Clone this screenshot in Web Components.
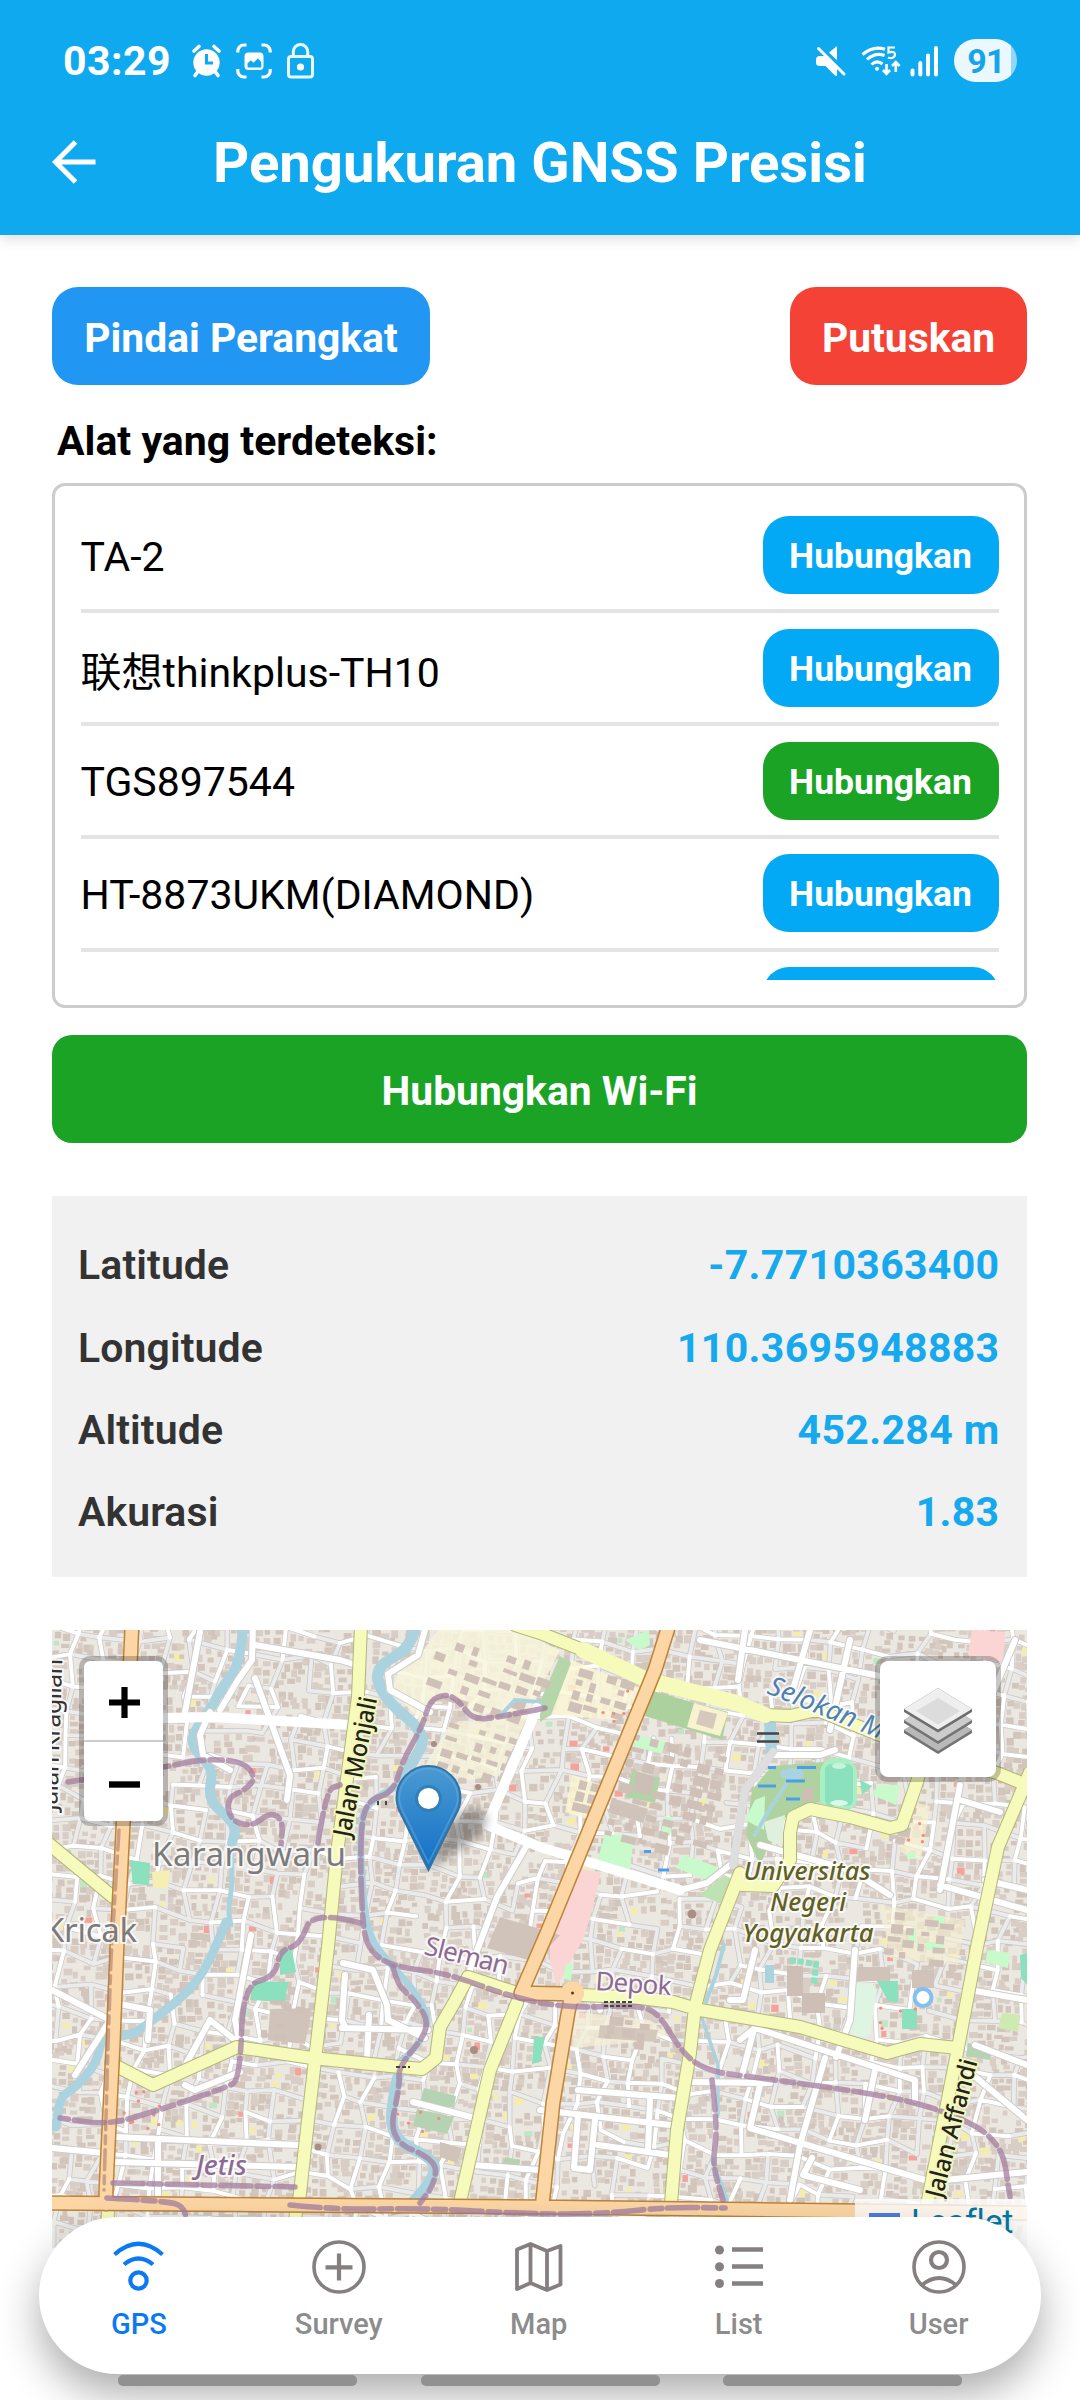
<!DOCTYPE html>
<html lang="id">
<head>
<meta charset="utf-8">
<title>Pengukuran GNSS Presisi</title>
<style>
html,body{margin:0;padding:0;background:#fff}
body{width:1080px;height:2400px;overflow:hidden;font-family:Roboto,"Noto Sans CJK SC",sans-serif;color:#000}
</style>
</head>
<body>
<gnss-app></gnss-app>
<script>
const define=(name,html,setup)=>{
  const t=document.createElement('template');t.innerHTML=html;
  customElements.define(name,class extends HTMLElement{
    constructor(){super();this.attachShadow({mode:'open'}).appendChild(t.content.cloneNode(true));}
    connectedCallback(){if(setup&&!this.ready){this.ready=true;setup(this,this.shadowRoot);}}
  });
};

define('status-bar',`<style>
:host{display:flex;justify-content:space-between;height:122px;padding:0 63px;box-sizing:border-box;color:#fff}
div{display:flex;align-items:center;height:121px}
.time{font-size:41px;font-weight:700;line-height:48px;margin-right:21px;letter-spacing:.5px}
svg{display:block;overflow:visible}
.bat{width:63px;height:43px;border-radius:22px;background:linear-gradient(90deg,#ecf8ff 0 57px,#90d7f9 57px);color:#16a5ea;font-size:34px;font-weight:700;line-height:44px;display:block;text-align:center;margin-left:15px;text-indent:1px;letter-spacing:-.8px}
</style>
<div><span class="time">03:29</span>
<svg width="29" height="33" viewBox="0 0 29 33" style="margin-right:15px"><circle cx="14.5" cy="18.5" r="13.2" fill="#fff"/><path d="M2 7l5-4.500M27 7l-5-4.500M5.500 28l-2.500 3.500M23.500 28l2.500 3.500" stroke="#fff" stroke-width="3.600" stroke-linecap="round"/><path d="M14.500 10v9h6.500" fill="none" stroke="#0fa9f0" stroke-width="3"/></svg>
<svg width="36" height="36" viewBox="0 0 36 36" style="margin-right:15px"><path d="M1.800 9.500V8a6 6 0 0 1 6-6h2.700M25.500 2h2.700a6 6 0 0 1 6 6v1.500M34.200 26v2a6 6 0 0 1-6 6h-2.700M10.500 34H7.800a6 6 0 0 1-6-6v-2" fill="none" stroke="#fff" stroke-width="3.200"/><rect x="8.500" y="9.500" width="19" height="17.500" rx="4" fill="#fff"/><path d="M11.500 23.500v-3.200l3.500-3 2.500 2.400 4.500-4.400 3.300 4v4.200q0 1-1 1h-11.800q-1 0-1-1z" fill="#0fa9f0"/></svg>
<svg width="27" height="36" viewBox="0 0 27 36"><rect x="1.500" y="13.500" width="24" height="20.500" rx="2.500" fill="none" stroke="#e9f9ff" stroke-width="3"/><path d="M6.300 13V8.500a7.200 7 0 0 1 14.400 0V13" fill="none" stroke="#e9f9ff" stroke-width="3"/><circle cx="13.500" cy="24" r="3.600" fill="#fff"/></svg></div>
<div>
<svg width="30" height="30" viewBox="0 0 30 30" style="margin-right:15px"><path d="M0 14q0-4 4-4h4.500L21 22.500V30q-1.500 0-2.500-1L9.500 20H4q-4 0-4-3zM13 6.500L21 0v14.200z" fill="#fff"/><path d="M2.500 2.500L28 28" stroke="#fff" stroke-width="3" stroke-linecap="round"/></svg>
<svg width="41" height="30" viewBox="0 0 41 30" style="margin-right:8px"><g fill="none" stroke="#fff" stroke-width="3"><path d="M1.500 8.500Q12 -0.500 24 3.200M6 13.500Q14.500 6 23.500 9.500M10.500 18.500Q16 13.500 21.500 18"/><path d="M34 1.500h-6.500v5c5-1.500 6.800 0 6.500 2.500s-3.500 4-7 2.500" stroke-width="2.200"/><path d="M25.500 18v9M22 24l3.500 3.800L29 24M34.800 26v-9.500M31 20l3.800-3.800L38.600 20" stroke-width="2.600"/></g><circle cx="16" cy="22.800" r="2" fill="#fff"/></svg>
<svg width="29" height="30" viewBox="0 0 29 30"><path d="M2.500 24.500v4M10.300 17v11.500M18 9.500v19M26 2v26.500" stroke="#fff" stroke-width="4" stroke-linecap="round"/></svg>
<span class="bat">91</span></div>`);

define('app-header',`<style>
:host{display:block;background:#0fa9f0;height:235px;box-shadow:0 4px 12px rgba(0,0,0,.13)}
.bar{display:flex;align-items:center;height:83px;padding-left:52px}
.bar svg{flex:none;margin-bottom:4px}
h1{margin:0;width:888px;text-align:center;color:#fff;font-size:56.25px;font-weight:700;line-height:83px;white-space:nowrap}
</style><status-bar></status-bar>
<div class="bar"><svg width="44" height="44" viewBox="0 0 44 44"><path d="M43.500 22H5M23.500 2L3.500 22l20 20" fill="none" stroke="#fff" stroke-width="5"/></svg><h1><slot></slot></h1></div>`);

define('app-button',`<style>
:host{display:flex;align-items:center;justify-content:center;box-sizing:border-box;width:var(--w);height:98px;padding-top:3px;border-radius:26px;background:#2196f3;color:#fff;font-weight:700;font-size:40.800px;white-space:nowrap}
:host([tone=red]){background:#f44336}
:host([tone=green]){background:#1ba326}
:host([small]){width:236px;height:78px;font-size:35.500px;background:#03a9f4;padding-top:2px;flex:none}
:host([small][tone=green]){background:#1ba326}
:host([wide]){height:108px;border-radius:20px}
</style><slot></slot>`);

define('device-row',`<style>
:host{display:flex;justify-content:space-between;align-items:center;height:93.300px;border-bottom:4px solid #e4e4e4;margin-bottom:15.500px;box-sizing:content-box}
app-button{margin-bottom:15.300px}
span{font-size:41px;line-height:50px;margin-bottom:12px}
:host([cjk]) span{padding-top:7px}
</style><span></span><app-button small>Hubungkan</app-button>`,(h,r)=>{
  r.querySelector('span').textContent=h.getAttribute('name')||'';
  if(h.hasAttribute('active'))r.querySelector('app-button').setAttribute('tone','green');
});

define('device-list',`<style>
:host{display:block;box-sizing:border-box;height:525px;border:3px solid #ccc;border-radius:13px;padding:30px 25.500px 25px}
div{height:464px;overflow:hidden}
</style><div><slot></slot></div>`);

define('info-row',`<style>
:host{display:flex;justify-content:space-between;align-items:center;height:82.400px;font-size:41px;font-weight:700}
b{font-weight:600;color:#333;letter-spacing:.1px}
span{color:#16a9ee;letter-spacing:.35px;margin-right:-.5px}
</style><b></b><span><slot></slot></span>`,(h,r)=>{r.querySelector('b').textContent=h.getAttribute('label');});

define('street-map',`<style>
:host{display:block;height:100%}
svg{display:block;width:975px;height:618px}
.art{filter:blur(.7px)}
text{font-family:"Noto Sans","Open Sans",sans-serif;paint-order:stroke;stroke:rgba(255,255,255,.75);stroke-width:4px;stroke-linejoin:round}
.r{fill:none;stroke-linejoin:round;stroke-linecap:round}
</style>
<svg viewBox="52 1630 975 618" xmlns="http://www.w3.org/2000/svg">
<rect x="52" y="1630" width="975" height="618" fill="#ebe7e1"/>
<g class="art"><g id="blocks"></g>
<g id="areas"></g>
<g id="water"></g><g id="roads"></g><g id="bounds"></g>
<g id="marks"></g></g>
<g>
<text x="152" y="1866" font-size="33" fill="#7b7b7b" textLength="194">Karangwaru</text>
<text x="44" y="1942" font-size="33" fill="#7b7b7b" textLength="93">Kricak</text>
<g font-weight="500" fill="#222"><text transform="translate(350 1838) rotate(-79)" font-size="25" textLength="142" lengthAdjust="spacingAndGlyphs" style="stroke:#f4f8b6">Jalan Monjali</text>
<text transform="translate(942 2199) rotate(-75.500)" font-size="25" textLength="142" lengthAdjust="spacingAndGlyphs" style="stroke:#f4f8b6">Jalan Affandi</text></g>
<text transform="translate(57 1811) rotate(-88)" font-size="25" fill="#333" textLength="152">Jalan Kragilan</text>
<g font-style="italic">
<g font-size="25" fill="#60601f" text-anchor="middle" font-weight="500"><text x="807" y="1880" textLength="127" lengthAdjust="spacingAndGlyphs">Universitas</text><text x="808" y="1911" textLength="76" lengthAdjust="spacingAndGlyphs">Negeri</text><text x="808" y="1942" textLength="131" lengthAdjust="spacingAndGlyphs">Yogyakarta</text></g>
<text transform="translate(766 1693) rotate(22)" font-size="27" fill="#4d80b3">Selokan Mataram</text>
<text x="196" y="2175" font-size="27" fill="#8d6a94" font-weight="500">Jetis</text></g>
<text transform="translate(423 1954) rotate(14)" font-size="26" fill="#8d6a94" textLength="86">Sleman</text>
<text transform="translate(595 1990) rotate(4)" font-size="26" fill="#8d6a94" textLength="76">Depok</text>
</g></svg>`,(h,r)=>{
  let seed=7;const rnd=()=>((seed=(seed*16807)%2147483647)/2147483647);
  const $=id=>r.getElementById(id);
  // Residential blocks: a jittered lattice of lanes with small buildings in each cell.
  const W=29,H=27,cols=44,rows=34,P=[];
  for(let j=0;j<rows;j++){P[j]=[];for(let i=0;i<cols;i++){
    const u=(i-6)*W+(rnd()-.5)*13,v=(j-6)*H+(rnd()-.5)*12,a=.13;
    P[j][i]=[52+u*Math.cos(a)-v*Math.sin(a),1600+u*Math.sin(a)+v*Math.cos(a)];}}
  let b='',minor='',lane='';
  const out=p=>p[0]<20||p[0]>1060||p[1]<1600||p[1]>2280;
  for(let j=0;j<rows-1;j++)for(let i=0;i<cols-1;i++){
    const p=P[j][i],q=P[j][i+1],s=P[j+1][i];if(out(p))continue;
    for(let y=0;y<3;y++)for(let x=0;x<3;x++){
      if(rnd()<.13)continue;
      const fx=.13+x*.28+rnd()*.05,fy=.13+y*.28+rnd()*.05;
      const cx=p[0]+(q[0]-p[0])*fx+(s[0]-p[0])*fy,cy=p[1]+(q[1]-p[1])*fx+(s[1]-p[1])*fy;
      const c=rnd();const col=c<.02?'#f4eeaa':c<.028?'#f3a39a':c<.035?'#bfe6c5':c<.55?'#d9cec5':'#d2c5bb';
      b+='<rect x="'+cx.toFixed(1)+'" y="'+cy.toFixed(1)+'" width="'+(4.5+rnd()*4.5).toFixed(1)+'" height="'+(4+rnd()*4).toFixed(1)+'" fill="'+col+'"/>';}
    const seg=(m,n)=>'M'+m[0].toFixed(1)+' '+m[1].toFixed(1)+'L'+n[0].toFixed(1)+' '+n[1].toFixed(1);
    if(rnd()<.85){if(rnd()<.45)minor+=seg(p,q);else lane+=seg(p,q);}
    if(rnd()<.8){if(rnd()<.45)minor+=seg(p,s);else lane+=seg(p,s);}
  }
  $('blocks').innerHTML=b+'<g class="r"><path d="'+lane+minor+'" stroke="#cbc8c6" stroke-width="5.400"/><path d="'+lane+'" stroke="#ebebeb" stroke-width="3.800"/><path d="'+minor+'" stroke="#fff" stroke-width="4"/></g>';

  const poly=(pts,f,o)=>'<polygon points="'+pts+'" fill="'+f+'"'+(o?' opacity="'+o+'"':'')+'/>';
  let a='';
  a+=poly('400,1668 420,1655 438,1630 515,1630 560,1650 530,1710 500,1712 470,1716 450,1695 430,1700 422,1722 392,1690','#f8f5dc',.85);
  a+=poly('450,1725 530,1712 500,1775 470,1780 425,1765','#f6f2da',.8);
  a+=poly('572,1660 645,1690 618,1720 540,1714 545,1700','#fdf7d6',.8);
  a+=poly('560,1656 571,1663 551,1715 540,1722 540,1702','#b4d6a9');
  a+=poly('650,1690 694,1703 728,1712 722,1740 645,1716','#add19e');
  a+=poly('694,1703 728,1713 720,1736 687,1727','#f8f2cf')+poly('700,1710 717,1714 713,1729 696,1724','#d6c8bb');
  a+=poly('625,1640 649,1630 650,1645 640,1650','#c8facc');
  a+=poly('633,1770 660,1778 655,1803 625,1797','#b0d3a7')+poly('636,1772 655,1777 650,1796 634,1792','#cdbfb5');
  a+=poly('612,1798 648,1809 643,1823 608,1812','#d0c3ba');
  a+=poly('572,1775 605,1786 590,1820 565,1812','#fbf6cf',.8);
  a+=poly('605,1834 634,1836 630,1869 596,1865','#c8facc');
  a+=poly('636,1735 665,1742 662,1754 633,1746','#c8facc');
  a+=poly('664,1816 673,1818 670,1836 661,1834','#c8facc')+poly('683,1855 718,1867 712,1882 676,1868','#c8facc');
  a+=poly('772,1766 824,1762 822,1800 780,1820 760,1865 746,1835 752,1790','#aed3a0');
  a+=poly('755,1800 765,1796 764,1830 745,1820','#c8facc')+poly('764,1822 785,1815 781,1846 768,1840','#e0f0df');
  a+=poly('802,1790 814,1786 813,1800 802,1802','#cdbfb5');
  a+=poly('700,1895 724,1875 735,1880 724,1905','#bfe2b3');
  a+='<rect x="820" y="1758" width="37" height="54" rx="15" fill="#a9efc4"/><rect x="825" y="1764" width="28" height="42" rx="6" fill="#8be0bd"/><ellipse cx="839" cy="1766" rx="7" ry="3" fill="#c9f4da"/><ellipse cx="839" cy="1803" rx="9" ry="3" fill="#dcf8e4"/>';
  a+=poly('878,1785 900,1785 896,1805 872,1795','#c8facc')+poly('860,1780 872,1786 862,1795','#8be0bd');
  a+=poly('578,1868 601,1873 590,1918 583,1940 572,1958 557,1987 550,1960 550,1945','#fbd5d3');
  a+=poly('566,1963 573,1965 571,1981 563,1978','#c8facc');
  a+=poly('972,1630 1005,1632 1003,1662 968,1655','#fbd5d3');
  a+=poly('130,1860 150,1863 149,1885 133,1884','#8be0bd')+poly('152,1872 170,1870 168,1888 153,1888','#f5efb3');
  a+=poly('500,1917 560,1935 535,1962 487,1948','#d0c3ba');
  a+=poly('280,1950 292,1950 296,1972 280,1975','#8be0bd')+poly('254,1981 288,1982 285,2002 250,2000','#8be0bd');
  a+=poly('270,2009 312,2008 305,2044 268,2040','#d0c3ba');
  a+=poly('424,2088 456,2096 454,2108 420,2102','#b5d3b3')+poly('417,2109 454,2117 447,2134 413,2126','#b5d3b3');
  a+=poly('440,2142 462,2148 457,2163 440,2157','#d0c3ba')+poly('505,2157 520,2160 519,2168 502,2165','#b5d3b3');
  a+=poly('534,2037 545,2037 540,2062 532,2064','#8be0bd');
  a+=poly('575,2012 650,2020 668,2035 640,2042 572,2048','#f7f1d8',.7);
  a+=poly('600,2025 658,2030 655,2042 598,2038','#d4c8ba');
  a+=poly('850,1990 858,1983 872,1983 877,1990 870,2034 862,2038 850,2034','#def5e4');
  a+=poly('877,1981 898,1981 898,2003 888,2001','#8be0bd')+'<rect x="902" y="2009" width="15" height="20" fill="#8be0bd"/>';
  a+='<rect x="855" y="1967" width="35" height="14" fill="#d0c3ba"/><rect x="787" y="1966" width="16" height="30" fill="#cdbfb5"/><rect x="802" y="1993" width="23" height="20" fill="#cdbfb5"/><rect x="912" y="1970" width="22" height="18" fill="#d0c3ba"/><path d="M790 1960l26 4-2 20" fill="none" stroke="#8be0bd" stroke-width="6" stroke-dasharray="6 2"/><rect x="765" y="1965" width="9" height="18" fill="#aad3df"/>';
  a+=poly('880,1905 965,1920 958,1965 890,1958','#f6f0d0',.6)+'<rect x="908" y="1928" width="8" height="14" fill="#c8facc"/><rect x="926" y="1942" width="18" height="8" fill="#c8facc"/><rect x="934" y="1916" width="10" height="10" fill="#c8facc"/>';
  a+=poly('988,1950 1010,1953 1008,1968 985,1962','#c8facc')+poly('1002,2013 1020,2015 1018,2032 998,2028','#cdebb0')+poly('968,2043 992,2048 990,2060 966,2056','#b5d3b3')+poly('1020,1955 1027,1953 1027,1985 1021,1978','#8be0bd');
  a+=poly('905,1800 930,1806 921,1860 900,1852','#f8f1cf',.7)+poly('907,1852 915,1852 915,1859 907,1859','#c8facc');
  // Campus and school buildings, aligned with the diagonal avenue.
  const bl=(x0,y0,n,m,dx,dy,t)=>{for(let j=0;j<m;j++)for(let i=0;i<n;i++){if(rnd()<.16)continue;a+='<rect transform="translate('+(x0+i*dx-j*dy*.3).toFixed(1)+' '+(y0+j*dy+i*dx*.25).toFixed(1)+') rotate('+(t)+')" width="'+(6+rnd()*dx*.6).toFixed(1)+'" height="'+(4+rnd()*6).toFixed(1)+'" fill="#cfc1b7"/>';}};
  bl(440,1638,7,5,17,13,20);bl(450,1722,5,4,15,13,18);bl(580,1668,4,4,14,11,16);bl(634,1734,6,9,17,12,14);bl(580,1780,2,3,12,11,14);bl(610,2016,3,3,15,9,5);bl(905,1806,1,5,14,10,10);bl(270,2000,3,4,13,10,2);bl(895,1912,4,4,15,12,5);
  for(let i=0;i<30;i++){const x=[585,120,905,880,130,395][i%6]+rnd()*45,y=[1690,2090,1810,2000,2100,2110][i%6]+rnd()*35;a+='<circle cx="'+x.toFixed(1)+'" cy="'+y.toFixed(1)+'" r="1.700" fill="#f28d84"/>';}
  $('areas').innerHTML=a;

  const ln=(d,c,w,x)=>'<path class="r" d="'+d+'" stroke="'+c+'" stroke-width="'+w+'" '+(x||'')+'/>';
  const smooth=p=>{let d='M'+p[0];for(let i=1;i<p.length-1;i++){const m=[(p[i][0]+p[i+1][0])/2,(p[i][1]+p[i+1][1])/2];d+='Q'+p[i]+' '+m;}return d+'L'+p[p.length-1];};
  const pts=s=>s.split(' ').map(q=>q.split(',').map(Number));
  const R1=smooth(pts('243,1625 241,1663 220,1690 212,1707 190,1737 197,1753 214,1770 207,1800 237,1825 232,1843'));
  const R1b=smooth(pts('231,1843 233,1880 228,1910 231,1925'));
  const R1c=smooth(pts('226,1922 220,1937 205,1970 187,1993 157,2017 130,2037 102,2035 97,2063 75,2088 60,2097 56,2127'));
  const R2=smooth(pts('415,1625 413,1647 373,1668 385,1700 428,1735 412,1763 400,1785'));
  const R2b=smooth(pts('400,1785 366,1800 360,1833 362,1887 368,1937 393,1967 418,1995 432,2027 398,2067'));
  const R2c=smooth(pts('402,2062 396,2080 388,2138 437,2160 432,2180 413,2202'));
  $('water').innerHTML=ln(R1,'#aad3df',10)+ln(R1b,'#aad3df',5)+ln(R1c,'#aad3df',9)+ln(R2,'#aad3df',11)+ln(R2b,'#aad3df',7)+ln(R2c,'#aad3df',11)+ln('M702 2018L718 2065L718 2115','#aad3df',3.5)+ln('M712 2160L727 2200','#aad3df',4)+ln('M724 1945L716 1975L706 2002','#aad3df',4)
   +poly('764,1722 776,1722 777,1757 766,1757','#aad3df')+'<ellipse cx="792" cy="1774" rx="12" ry="6" fill="#aad3df"/>'+ln('M789 1780L768 1812L755 1835','#aad3df',4)
   +ln('M500 1716L515 1700L540 1702','#aad3df',4);

  const white=['163,1718 213,1717 350,1725','537,1708 510,1765 487,1825 540,1847 680,1890 707,1883 730,1865','468,1975 497,1897 527,1845','200,1632 185,1712','253,1625 252,1660 238,1680 220,1710','255,1678 290,1775 287,1800','255,1645 340,1660 356,1665','210,1712 200,1735 203,1755 230,1770','425,1630 418,1655 388,1674 390,1690 430,1712','773,1752 745,1790 733,1865','773,1755 820,1755 835,1750','345,1975 342,2020 345,2027','343,1963 373,1970 387,2005 388,2020 425,2038','342,2028 428,2030','369,2015 367,2060','115,2137 298,2145','115,2162 298,2167','158,2142 158,2195','120,2004 150,2010 148,2040','52,1990 110,2020 75,2075','473,2165 540,2170','413,2102 475,2118','52,2148 105,2153','251,1935 235,2020 240,2045','180,2075 210,2020 235,2040','185,2085 195,2090 240,2072','755,1950 743,2000 730,2000','855,1950 850,2020 836,2057','740,2040 755,2028 915,2080 915,2100','755,2025 742,2075','690,2082 770,2083','825,2058 800,2145 790,2200','760,2085 750,2128 925,2180','600,2010 596,1995','540,2110 670,2125','578,2090 680,2098','578,2115 574,2168 590,2170 595,2120','598,2145 670,2155','650,2100 648,2150','875,2070 865,2120','940,1885 1027,1910','960,1800 1000,1812','960,1785 940,1890','760,1845 850,1870 890,1895','975,2045 1027,2065','967,2070 1027,2120','945,2180 1027,2172','812,2158 803,2175 860,2190','745,1630 738,1680','700,1640 900,1680','810,1630 790,1700','850,1640 830,1730','1015,1640 990,1700','985,1880 1027,1890','970,1990 1027,2000'].map(s=>'M'+s.split(' ').join('L')).join('');
  const yellow=['361,1625 358,1697 337,1853 328,1947 315,2060 305,2147 299,2202','48,1843 113,1897','118,2067 153,2085 237,2047 312,2058 400,2067 422,2069','422,2069 436,2058 440,2027 454,2003 468,1977 517,1993','517,2003 490,2070 460,2202','515,1625 540,1633 583,1650 647,1680 737,1703 765,1715 790,1716 817,1710 880,1735 997,1773 1022,1783','920,1770 917,1782 902,1825 890,1828 850,1817 810,1809 793,1817 790,1833 790,1860 773,1886 742,1885','740,1873 710,1950 695,2007 690,2053 677,2130 671,2203','1030,1772 998,1847 977,1947 957,2053 927,2205','583,1995 640,1998 673,2002 700,2010 800,2027 887,2053 920,2044 957,2048','108,2212 106,2250','296,2208 294,2250'].map(s=>'M'+s.split(' ').join('L')).join('');
  const orange='M132 1625L123 1827L117 1947L113 2047L106 2190L106 2204M48 2203L540 2207L1030 2213M669 1625L655 1670L607 1787L547 1933L521 1993L572 1994M572 1994L568 2013L553 2103L542 2207';
  $('roads').innerHTML=ln(white,'#cfcccb',8)+ln(white,'#fff',6)+ln('M163 1718L213 1717L350 1725M537 1708L487 1825L540 1847L680 1890','#fff',10)+ln('M773 1752L745 1790L733 1865','#dedede',8)
   +ln(yellow,'#b4b67c',14)+ln(yellow,'#f6fabb',12)+ln('M583 1650L647 1680L737 1703L765 1715','#f6fabb',16)+ln(orange,'#bd8338',15.5)+ln(orange,'#fcd6a4',12.5)+'<circle cx="572.500" cy="1993" r="11.500" fill="#fcd6a4"/><circle cx="572.500" cy="1993" r="1.500" fill="#5b3a1b"/>';

  const dash='stroke-dasharray="30 6 12 6" stroke-linecap="butt" opacity=".75"';
  const B=['68,1782 163,1768 200,1759 243,1761 256,1778 245,1790 227,1798 230,1820 252,1827 270,1812 283,1820 281,1845','318,1843 326,1790 340,1785','545,1708 500,1717 473,1720 458,1700 446,1694 430,1700 422,1727 403,1760 393,1793 367,1800 360,1833 362,1920 368,1950 393,1967 447,1973 517,1999 572,2008 640,2005 660,2015 680,2050 705,2071 760,2078 870,2093 935,2107 1001,2138 1010,2197','360,1923 313,1910 300,1945 280,1950 275,1977 243,1985 240,2080 225,2088 153,2112 107,2125 60,2118','113,2183 295,2187','107,2198 165,2201 184,2206 187,2225','393,1967 397,1985 415,2000 432,2027 398,2067 400,2085 388,2140 437,2160 434,2185 420,2203','712,2080 718,2130 712,2163 723,2200','290,2205 340,2210 420,2208 530,2214 600,2214 670,2207 725,2208'];
  $('bounds').innerHTML=B.map(s=>ln(smooth(pts(s)),'#a37e9f',5.6,dash)).join('')+ln('M119 1830L111 1960L108 2045L104 2190','#a87a72',3.5,'stroke-dasharray="20 6 8 6" stroke-linecap="butt" opacity=".6"');
  $('marks').innerHTML='<path d="M757 1733.500h22M757 1741.500h22" stroke="#454545" stroke-width="2.600"/><path d="M768 1767.500h8M797 1767.500h19M786 1781h19M758 1786h18M786 1799h14M644 1851.500h7M658 1870h11" stroke="#4d9eea" stroke-width="2.800"/><circle cx="923" cy="1997.500" r="8.500" fill="#fff" stroke="#84bff2" stroke-width="4"/><path d="M378 1801v5M386 1801v5M604 2002h28M604 2006h28M396 2067h14" stroke="#444" stroke-width="2" stroke-dasharray="4 2"/><g fill="#a88e84"><circle cx="434" cy="1744" r="3"/><circle cx="478" cy="1787" r="3"/><circle cx="474" cy="2050" r="4"/><circle cx="318" cy="2147" r="3.500"/><circle cx="692" cy="1914" r="4.500"/></g>';
});

define('map-panel',`<style>
:host{display:block;position:relative;width:975px;height:618px;overflow:hidden}
.zoom{position:absolute;left:27px;top:26px;border:5px solid rgba(0,0,0,.22);border-radius:11px;background:#fff;background-clip:padding-box;width:79px;height:160px}
.zoom div{height:81px;box-sizing:border-box;display:flex;align-items:center;justify-content:center}
.zoom div:first-child{border-bottom:2px solid #ccc}
.zoom svg{margin-top:4px;margin-left:2px}
.layers{position:absolute;left:823px;top:26px;width:116px;height:116px;border:5px solid rgba(0,0,0,.22);border-radius:13px;background:#fff;background-clip:padding-box;display:flex;align-items:center;justify-content:center}
.layers svg{margin-top:4px}
.pin{position:absolute;left:343px;top:134px}
.attr{position:absolute;right:0;top:569px;width:172px;height:49px;box-sizing:border-box;padding-left:14px;display:flex;align-items:center;gap:11px;background:rgba(255,255,255,.8);color:#0078a8;font-size:34px;white-space:nowrap}
.attr span{line-height:40px;padding-bottom:6px;letter-spacing:-.3px}
.flag{width:31px;height:21px;background:linear-gradient(#4c7be1 0 50%,#ffd500 50%);margin-top:-1px}
</style>
<street-map></street-map>
<div class="zoom"><div><svg width="31" height="31"><path d="M0 15.500h31M15.500 0v31" stroke="#000" stroke-width="6.200"/></svg></div><div><svg width="31" height="31"><path d="M0 15.500h31" stroke="#000" stroke-width="6.400"/></svg></div></div>
<div class="layers"><svg width="68" height="66" viewBox="0 0 68 66"><path d="M0 42l34-21 34 21v3L34 66 0 45z" fill="#747474"/><path d="M0 42l34-21 34 21-34 21z" fill="#b9b9b9"/><path d="M0 32l34-21 34 21v3L34 56 0 35z" fill="#747474"/><path d="M0 32l34-21 34 21-34 21z" fill="#ccc"/><path d="M0 21L34 0l34 21v3L34 44.500 0 24z" fill="#6d6d6d"/><path d="M0 21L34 0l34 21-34 20.500z" fill="#efefef"/><path d="M12 23l22-13 22 13-22 13.500z" fill="#dcdcdc"/></svg></div>
<svg class="pin" width="125" height="112" viewBox="0 0 125 112"><defs><linearGradient id="g" x1="0" y1="0" x2="0" y2="1"><stop offset="0" stop-color="#4b9bd2"/><stop offset="1" stop-color="#126fc6"/></linearGradient><filter id="f" x="-40%" y="-40%" width="180%" height="180%"><feGaussianBlur stdDeviation="5"/></filter></defs>
<path d="M34 106Q48 62 66 48q17-9 25 3 3 14-16 28z" fill="#000" opacity=".32" filter="url(#f)"/>
<path d="M33.500 106L6.500 51Q1.500 42 1.500 34a32 32 0 0 1 64 0q0 8-5 17z" fill="url(#g)" stroke="#3274a3" stroke-width="2"/><path d="M33.500 99L9 49.500Q4.200 41 4.200 34a29.300 29.300 0 0 1 58.600 0q0 7-4.800 15.500z" fill="none" stroke="#6cb0df" stroke-width="1.800" opacity=".45"/>
<circle cx="33.500" cy="34.500" r="12" fill="#fff" stroke="#2f7fb9" stroke-width="3"/></svg>
<div class="attr"><i class="flag"></i><span>Leaflet</span></div>`);

const ICONS={
 gps:'<path d="M2.500 14.500Q26.500-7 50.500 14.500M12 24.500Q26.500 12.500 41 24.500" /><circle cx="26.500" cy="40.500" r="8.200"/>',
 survey:'<circle cx="27" cy="27" r="25" stroke-width="3.600"/><path d="M27 13.500v27M13.500 27.300h27"/>',
 map:'<path d="M5 9.500l13.500-5.500 16.500 7 13.500-5v38.500l-13.500 5.500-16.500-7-13.500 6zM18.500 4v39M35 11v39" stroke-width="3.800" stroke-linejoin="round"/>',
 list:'<g fill="currentColor" stroke="none"><circle cx="7.500" cy="10" r="4.500"/><circle cx="7.500" cy="26.800" r="4.500"/><circle cx="7.500" cy="43.500" r="4.500"/></g><path d="M20 9.500h31M20 26.500h31M20 43.500h31" stroke-width="4.600"/>',
 user:'<circle cx="27" cy="27" r="25" stroke-width="3.600"/><circle cx="27" cy="20" r="8" stroke-width="4.200"/><path d="M10 45Q27 31 44 45" stroke-width="3.800"/>'
};
define('nav-item',`<style>
:host{display:flex;flex-direction:column;align-items:center;width:200.400px;color:#857f80}
svg{width:54px;height:54px;margin-top:23px;fill:none;stroke:currentColor;stroke-width:4.200;overflow:visible}
span{font-size:29px;font-weight:500;line-height:34px;margin-top:13.500px;color:#8c8c8c}
:host([active]),:host([active]) span{color:#0b79f3}
</style><svg viewBox="0 0 54 54"></svg><span><slot></slot></span>`,(h,r)=>{r.querySelector('svg').innerHTML=ICONS[h.getAttribute('icon')];});

define('bottom-nav',`<style>
:host{position:absolute;left:39px;top:2216.500px;width:1002px;height:157.500px;box-sizing:border-box;padding-right:2.500px;border-radius:79px;background:#fff;display:flex;justify-content:center;box-shadow:0 20px 42px rgba(0,0,0,.32)}
</style><nav-item icon="gps" active>GPS</nav-item><nav-item icon="survey">Survey</nav-item><nav-item icon="map">Map</nav-item><nav-item icon="list">List</nav-item><nav-item icon="user">User</nav-item>`);

define('gesture-bars',`<style>
:host{position:absolute;left:0;top:2375px;width:1080px;display:flex;justify-content:center;gap:63.500px}
i{width:239px;height:11px;border-radius:5px;background:#919191}
</style><i></i><i></i><i></i>`);

define('gnss-app',`<style>
:host{display:block;position:relative;width:1080px;height:2400px;overflow:hidden;background:#fff}
main{padding:52px 53px 0 52px}
.actions{display:flex;justify-content:space-between}
h2{margin:31px 0 0 5px;font-size:41px;line-height:50px;font-weight:700;padding-bottom:17px}
.wifi{margin-top:27px}
.info{margin-top:53px;background:#f1f1f1;padding:28px 28px 24px 26px;height:329px}
map-panel{margin-top:53px}
</style>
<app-header>Pengukuran GNSS Presisi</app-header>
<main>
<div class="actions"><app-button style="--w:378px">Pindai Perangkat</app-button><app-button tone="red" style="--w:237px">Putuskan</app-button></div>
<h2>Alat yang terdeteksi:</h2>
<device-list><device-row name="TA-2"></device-row><device-row cjk name="联想thinkplus-TH10"></device-row><device-row name="TGS897544" active></device-row><device-row name="HT-8873UKM(DIAMOND)"></device-row><device-row></device-row></device-list>
<app-button class="wifi" wide tone="green">Hubungkan Wi-Fi</app-button>
<div class="info"><info-row label="Latitude">-7.7710363400</info-row><info-row label="Longitude">110.3695948883</info-row><info-row label="Altitude">452.284 m</info-row><info-row label="Akurasi">1.83</info-row></div>
<map-panel></map-panel>
</main>
<bottom-nav></bottom-nav>
<gesture-bars></gesture-bars>`);
</script>
</body>
</html>
